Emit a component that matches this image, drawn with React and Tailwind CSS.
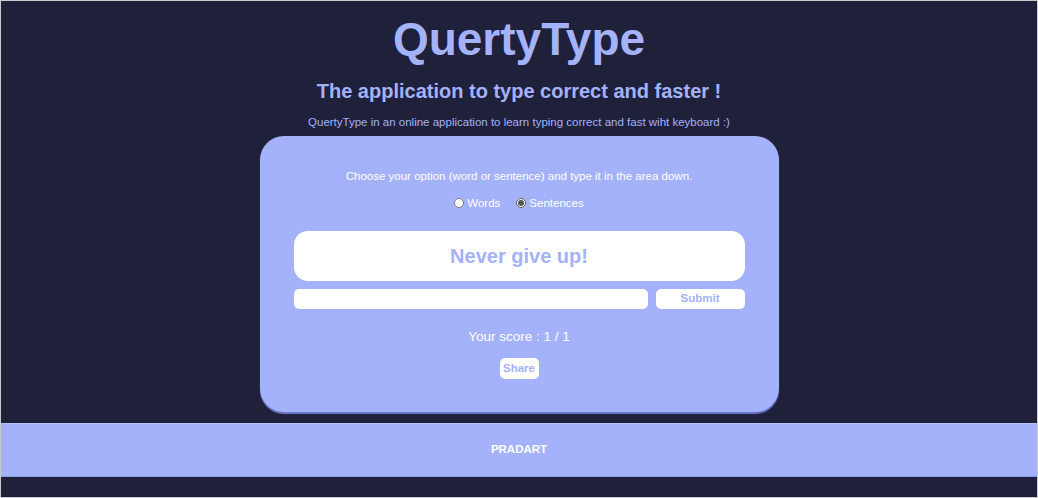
import { useState } from 'react';

const App = () => {
  const [mode, setMode] = useState('sentences');
  const [answer, setAnswer] = useState('');

  return (
    <div className="min-h-[498px] bg-[#1f203a] border border-[#c9c9cf] font-['Liberation_Sans',Arial,sans-serif] flex flex-col">
      <header className="flex flex-col items-center">
        <h1 className="mt-[12px] text-[46px] leading-[52px] font-bold text-[#a4b2fb]">QuertyType</h1>
        <h2 className="mt-[14px] text-[20px] leading-[24px] font-bold text-[#a4b2fb]">The application to type correct and faster !</h2>
        <p className="mt-[12px] text-[11.5px] leading-[14px] text-[#a4b2fb]">QuertyType in an online application to learn typing correct and fast wiht keyboard :)</p>
      </header>

      <main className="flex justify-center mt-[7px]">
        <div className="w-[519px] h-[276px] bg-[#a4b2fb] rounded-[24px] shadow-[0_2px_1px_rgba(120,130,220,0.9)] flex flex-col items-center px-[34px]">
          <p className="mt-[32px] text-[11.5px] leading-[16px] text-white">Choose your option (word or sentence) and type it in the area down.</p>

          <div className="mt-[11px] flex items-center gap-[16px] text-[11.5px] leading-[16px] text-white">
            <label className="flex items-center gap-[3px]">
              <input type="radio" name="mode" checked={mode === 'words'} onChange={() => setMode('words')} className="w-[10px] h-[10px] m-0 accent-[#555]" />
              Words
            </label>
            <label className="flex items-center gap-[3px]">
              <input type="radio" name="mode" checked={mode === 'sentences'} onChange={() => setMode('sentences')} className="w-[10px] h-[10px] m-0 accent-[#555]" />
              Sentences
            </label>
          </div>

          <div className="mt-[20px] w-full h-[50px] bg-white rounded-[14px] flex items-center justify-center">
            <span className="text-[20px] font-bold text-[#a4b2fb]">Never give up!</span>
          </div>

          <div className="mt-[8px] w-full flex gap-[8px]">
            <input className="flex-1 h-[20px] bg-white rounded-[5px] outline-none px-2 text-[12px]" value={answer} onChange={e => setAnswer(e.target.value)} />
            <button className="w-[89px] h-[20px] bg-white rounded-[5px] text-[11.5px] font-bold text-[#a4b2fb]">Submit</button>
          </div>

          <p className="mt-[19px] text-[13.5px] leading-[18px] text-white">Your score : 1 / 1</p>

          <button className="mt-[12px] w-[39px] h-[21px] bg-white rounded-[5px] text-[11.5px] font-bold text-[#a4b2fb]">Share</button>
        </div>
      </main>

      <footer className="mt-[11px] h-[54px] bg-[#a4b2fb] border-t border-[#b4c0fc] border-b border-b-[#8c9be6] flex items-center justify-center">
        <span className="text-[11.5px] font-bold text-white">PRADART</span>
      </footer>
    </div>
  );
};

export default App;
